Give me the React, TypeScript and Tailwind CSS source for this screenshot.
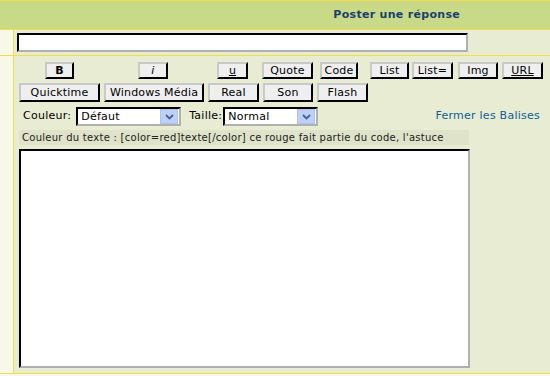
import React from "react";

// Bouton style "outset" des vieux formulaires phpBB
const Btn: React.FC<{ w: string; h?: string; className?: string; children: React.ReactNode }> = ({ w, h = "h-[17px]", className = "", children }) => (
    <div className={`${w} ${h} shrink-0 box-border border-2 border-t-[#c9c9c9] border-l-[#c9c9c9] border-r-black border-b-black bg-[#efefef] text-[11px] tracking-[0.2px] leading-none text-black flex items-center justify-center ${className}`}>
        {children}
    </div>
);

// Liste déroulante façon XP
const FakeSelect: React.FC<{ w: string; value: string }> = ({ w, value }) => (
    <div className={`${w} h-[19px] shrink-0 box-border border-2 border-t-black border-l-black border-r-[#b0b0b0] border-b-[#b0b0b0] bg-white flex items-center justify-between pl-[3px] pr-px`}>
        <span className="text-[11px] leading-none text-black">{value}</span>
        <div className="w-[18px] h-[15px] bg-[#bdd0f8] border border-[#aec2ec] flex items-center justify-center">
            <svg width="9" height="6" viewBox="0 0 9 6">
                <path d="M1 1 L4.5 4.5 L8 1" fill="none" stroke="#4a5f8a" strokeWidth="1.8" />
            </svg>
        </div>
    </div>
);

export default function App() {
    return (
        <div className="w-[550px] h-[376px] overflow-hidden bg-[#f7f9e8] font-['DejaVu_Sans',Verdana,sans-serif]">
            {/* En-tête */}
            <div className="h-[30px] border-t border-b border-[#f5dc4a] bg-[#c8da87] flex items-center justify-end pr-[90px]">
                <span className="text-[11px] font-bold tracking-[0.3px] text-[#1d3f6e]">Poster une réponse</span>
            </div>

            {/* Sujet */}
            <div className="flex h-[26px] border-b border-[#f5dc4a]">
                <div className="w-[14px] shrink-0 border-r border-[#f5dc4a] bg-[#f7f9e8]" />
                <div className="flex-1 bg-[#e8ecd3] pl-[3px] pt-[3px]">
                    <div className="w-[451px] h-[19px] box-border border-2 border-t-black border-l-black border-r-[#b0b0b0] border-b-[#b0b0b0] bg-white" />
                </div>
            </div>

            {/* Message */}
            <div className="flex h-[318px] border-b border-[#f5dc4a]">
                <div className="w-[14px] shrink-0 border-r border-[#f5dc4a] bg-[#f7f9e8]" />
                <div className="flex-1 bg-[#e8ecd3] pt-[6px] flex flex-col">
                    <div className="flex">
                        <Btn w="w-[29px] ml-[31px]" className="font-bold">B</Btn>
                        <Btn w="w-[30px] ml-[64px]" className="italic">i</Btn>
                        <Btn w="w-[31px] ml-[49px]" className="underline">u</Btn>
                        <Btn w="w-[51px] ml-[14px]">Quote</Btn>
                        <Btn w="w-[38px] ml-[7px]">Code</Btn>
                        <Btn w="w-[39px] ml-[12px]">List</Btn>
                        <Btn w="w-[41px] ml-[3px]">List=</Btn>
                        <Btn w="w-[40px] ml-[5px]">Img</Btn>
                        <Btn w="w-[41px] ml-[4px]" className="underline">URL</Btn>
                    </div>
                    <div className="flex mt-[4px] pl-[5px] gap-[4px]">
                        <Btn w="w-[81px]" h="h-[19px]">Quicktime</Btn>
                        <Btn w="w-[100px]" h="h-[19px]">Windows Média</Btn>
                        <Btn w="w-[51px]" h="h-[19px]">Real</Btn>
                        <Btn w="w-[50px]" h="h-[19px]">Son</Btn>
                        <Btn w="w-[51px]" h="h-[19px]">Flash</Btn>
                    </div>
                    <div className="flex items-center mt-[5px] pl-[9px] pr-[10px] text-[11px] tracking-[0.25px] text-black">
                        <span className="mr-[5px]">Couleur:</span>
                        <FakeSelect w="w-[105px]" value="Défaut" />
                        <span className="ml-[8px] mr-px">Taille:</span>
                        <FakeSelect w="w-[95px]" value="Normal" />
                        <span className="ml-auto text-[#0b5f95]">Fermer les Balises</span>
                    </div>
                    <div className="ml-[5px] mt-[4px] w-[450px] h-[15px] bg-[#dfe3c9] flex items-center pl-[3px] text-[10px] tracking-[0.27px] text-[#222] whitespace-nowrap overflow-hidden">
                        Couleur du texte : [color=red]texte[/color] ce rouge fait partie du code, l'astuce
                    </div>
                    <div className="ml-[5px] mt-[4px] w-[451px] h-[219px] box-border border-2 border-t-black border-l-black border-r-[#b0b0b0] border-b-[#b0b0b0] bg-white" />
                </div>
            </div>
        </div>
    );
}
